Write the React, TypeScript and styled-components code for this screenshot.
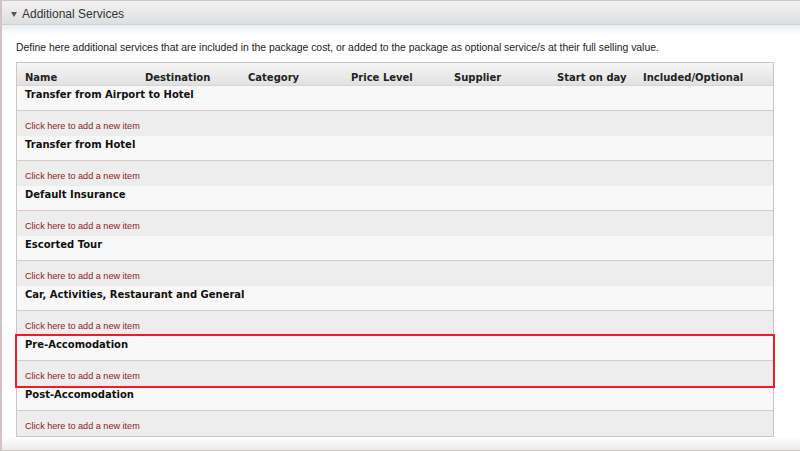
import React from "react";
import styled, { createGlobalStyle } from "styled-components";

const GlobalStyle = createGlobalStyle`
  html, body {
    margin: 0;
    padding: 0;
    background: #ffffff;
    overflow: hidden;
  }
  body {
    font-family: "Liberation Sans", Arial, sans-serif;
  }
`;

const Panel = styled.div`
  width: 812px;
  height: 449px;
  border-left: 2px solid #d2c4c4;
  border-top: 1px solid #d2c4c4;
  border-bottom: 2px solid #d2c4c4;
  display: flex;
  flex-direction: column;
  box-sizing: content-box;
`;

const PanelHeader = styled.div`
  height: 24px;
  display: flex;
  align-items: center;
  gap: 5px;
  padding: 2px 0 0 9px;
  box-sizing: border-box;
  background: linear-gradient(#f3f3f3, #dedede);
  border-bottom: 1px solid #c9d2da;
  font-size: 12px;
  color: #333333;
`;

const Caret = styled.span`
  width: 0;
  height: 0;
  border-left: 3px solid transparent;
  border-right: 3px solid transparent;
  border-top: 5px solid #555555;
  margin-top: 1px;
`;

const HeaderFade = styled.div`
  height: 10px;
  background: linear-gradient(#e9eef2, #ffffff);
`;

const Body = styled.div`
  flex: 1;
  padding: 7px 0 0 14px;
  display: flex;
  flex-direction: column;
`;

const Description = styled.p`
  margin: 0 0 8px 0;
  font-size: 10.4px;
  color: #222222;
  line-height: 12px;
`;

const Table = styled.div`
  width: 756px;
  border: 1px solid #cfc4c4;
  border-top-color: #c8c8c8;
  border-left-color: #c8c8c8;
  font-family: "DejaVu Sans", Verdana, sans-serif;
`;

const HeadRow = styled.div`
  height: 23px;
  display: grid;
  grid-template-columns: 120px 103px 103px 103px 103px 86px 1fr;
  align-items: center;
  padding: 6px 0 0 8px;
  box-sizing: border-box;
  background: linear-gradient(#f6f6f6, #e1e1e1);
  border-bottom: 1px solid #d6d6d6;
`;

const HeadCell = styled.span`
  font-size: 10px;
  font-weight: bold;
  color: #222222;
`;

const Group = styled.div<{ $highlight?: boolean }>`
  position: relative;
  outline: ${(p) => (p.$highlight ? "2px solid #ee1c24" : "none")};
  z-index: ${(p) => (p.$highlight ? 1 : 0)};
`;

const TitleRow = styled.div`
  height: 25px;
  padding: 3px 0 0 8px;
  box-sizing: border-box;
  background: #f8f8f8;
  border-bottom: 1px solid #d8c9c9;
  font-size: 10px;
  font-weight: bold;
  color: #111111;
`;

const AddRow = styled.div`
  height: 25px;
  box-sizing: border-box;
  display: flex;
  align-items: flex-end;
  padding: 0 0 5px 8px;
  background: #ededed;
  border-bottom: 1px solid #d8c9c9;
  &:last-child {
    border-bottom: none;
  }
`;

const AddLink = styled.a`
  font-family: "Liberation Sans", Arial, sans-serif;
  font-size: 9.1px;
  color: #8e1b22;
  text-decoration: none;
  cursor: pointer;
`;

const PanelFooter = styled.div`
  height: 13px;
  background: linear-gradient(#ffffff, #ebebeb);
`;

const columns = [
  "Name",
  "Destination",
  "Category",
  "Price Level",
  "Supplier",
  "Start on day",
  "Included/Optional",
];

const groups = [
  "Transfer from Airport to Hotel",
  "Transfer from Hotel",
  "Default Insurance",
  "Escorted Tour",
  "Car, Activities, Restaurant and General",
  "Pre-Accomodation",
  "Post-Accomodation",
];

const App: React.FunctionComponent = () => {
  return (
    <>
      <GlobalStyle />
      <Panel>
        <PanelHeader>
          <Caret />
          Additional Services
        </PanelHeader>
        <HeaderFade />
        <Body>
          <Description>
            Define here additional services that are included in the package
            cost, or added to the package as optional service/s at their full
            selling value.
          </Description>
          <Table>
            <HeadRow>
              {columns.map((c) => (
                <HeadCell key={c}>{c}</HeadCell>
              ))}
            </HeadRow>
            {groups.map((g) => (
              <Group key={g} $highlight={g === "Pre-Accomodation"}>
                <TitleRow>{g}</TitleRow>
                <AddRow>
                  <AddLink>Click here to add a new item</AddLink>
                </AddRow>
              </Group>
            ))}
          </Table>
        </Body>
        <PanelFooter />
      </Panel>
    </>
  );
};

export default App;
